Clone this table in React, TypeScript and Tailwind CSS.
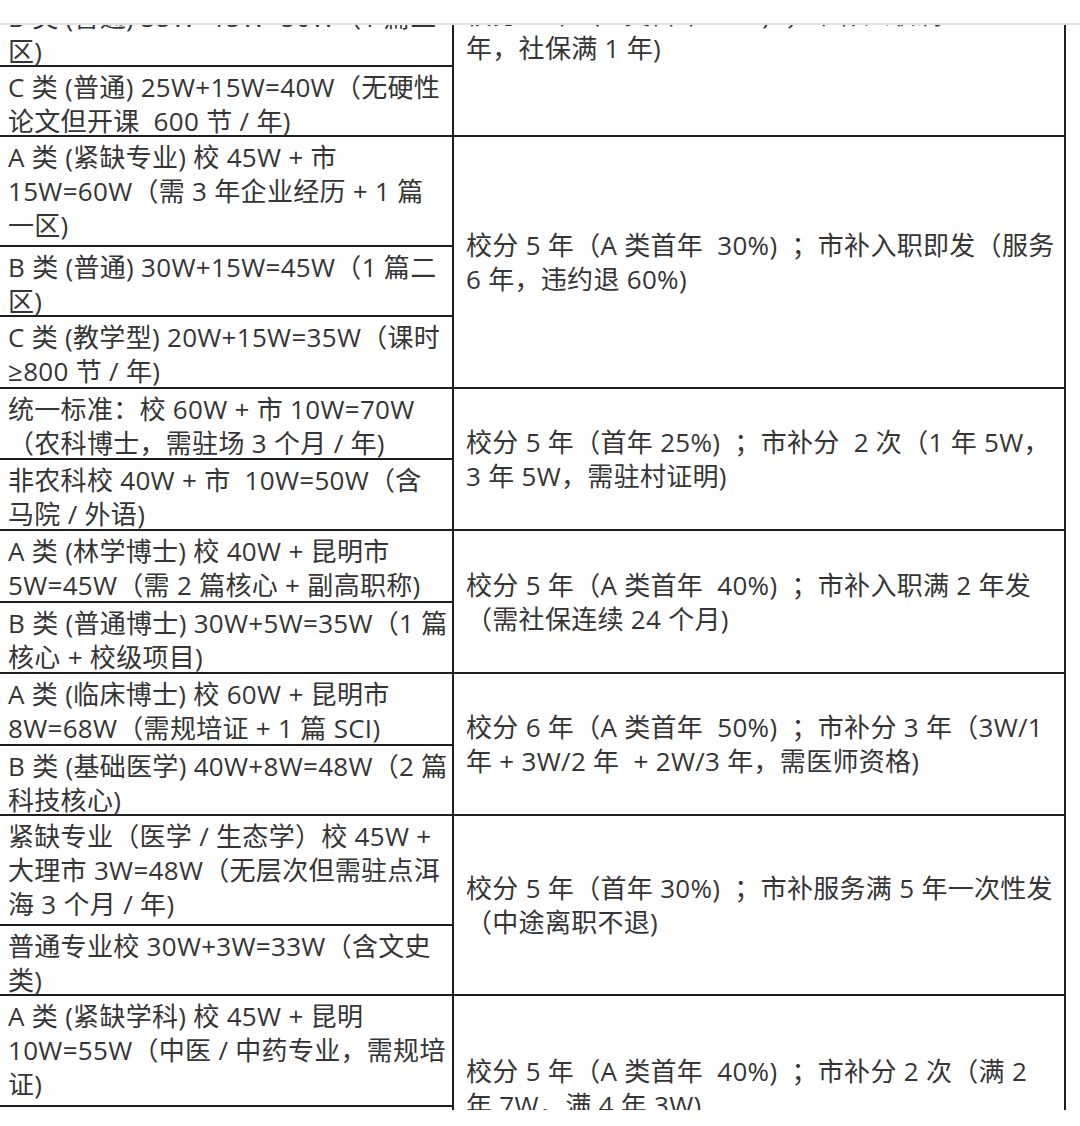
type Cell = { h: number; lines: string[] };
type Row = { cells: Cell[]; right: string[] };

const rows: Row[] = [
	{
		cells: [
			{ h: 70, lines: ["A 类 (紧缺专业) 校 50W + 市", "15W=65W（需 2 篇一区)"] },
			{ h: 70, lines: ["B 类 (普通) 35W+15W=50W（1 篇二", "区)"] },
			{ h: 70, lines: ["C 类 (普通) 25W+15W=40W（无硬性", "论文但开课  600 节 / 年)"] },
		],
		right: ["校分 5 年（A 类首年 30%)  ；市补入职满 1", "年，社保满 1 年)"],
	},
	{
		cells: [
			{
				h: 110,
				lines: ["A 类 (紧缺专业) 校 45W + 市", "15W=60W（需 3 年企业经历 + 1 篇", "一区)"],
			},
			{ h: 70, lines: ["B 类 (普通) 30W+15W=45W（1 篇二", "区)"] },
			{ h: 72, lines: ["C 类 (教学型) 20W+15W=35W（课时", "≥800 节 / 年)"] },
		],
		right: ["校分 5 年（A 类首年  30%)  ；市补入职即发（服务", "6 年，违约退 60%)"],
	},
	{
		cells: [
			{ h: 71, lines: ["统一标准：校 60W + 市 10W=70W", "（农科博士，需驻场 3 个月 / 年)"] },
			{ h: 71, lines: ["非农科校 40W + 市  10W=50W（含", "马院 / 外语)"] },
		],
		right: ["校分 5 年（首年 25%)  ；市补分  2 次（1 年 5W，", "3 年 5W，需驻村证明)"],
	},
	{
		cells: [
			{ h: 72, lines: ["A 类 (林学博士) 校 40W + 昆明市", "5W=45W（需 2 篇核心 + 副高职称)"] },
			{ h: 71, lines: ["B 类 (普通博士) 30W+5W=35W（1 篇", "核心 + 校级项目)"] },
		],
		right: ["校分 5 年（A 类首年  40%)  ；市补入职满 2 年发", "（需社保连续 24 个月)"],
	},
	{
		cells: [
			{ h: 72, lines: ["A 类 (临床博士) 校 60W + 昆明市", "8W=68W（需规培证 + 1 篇 SCI)"] },
			{ h: 70, lines: ["B 类 (基础医学) 40W+8W=48W（2 篇", "科技核心)"] },
		],
		right: ["校分 6 年（A 类首年  50%)  ；市补分 3 年（3W/1", "年 + 3W/2 年  + 2W/3 年，需医师资格)"],
	},
	{
		cells: [
			{
				h: 110,
				lines: ["紧缺专业（医学 / 生态学）校 45W +", "大理市 3W=48W（无层次但需驻点洱", "海 3 个月 / 年)"],
			},
			{ h: 70, lines: ["普通专业校 30W+3W=33W（含文史", "类)"] },
		],
		right: ["校分 5 年（首年 30%)  ；市补服务满 5 年一次性发", "（中途离职不退)"],
	},
	{
		cells: [
			{
				h: 111,
				lines: ["A 类 (紧缺学科) 校 45W + 昆明", "10W=55W（中医 / 中药专业，需规培", "证)"],
			},
			{ h: 74, lines: ["B 类 (普通) 30W+10W=40W（1 篇", "核心)"] },
		],
		right: ["校分 5 年（A 类首年  40%)  ；市补分 2 次（满 2", "年 7W，满 4 年 3W)"],
	},
];

function TableRow({ row }: { row: Row }) {
	return (
		<div className="flex">
			<div className="flex w-[454px] shrink-0 flex-col border-r-2 border-[#1f1f1f]">
				{row.cells.map((cell, i) => (
					<div
						key={i}
						className="border-b-2 border-[#1f1f1f] pl-2 pt-[3px]"
						style={{ height: cell.h }}
					>
						{cell.lines.map((line, j) => (
							<div key={j} className="whitespace-pre">
								{line}
							</div>
						))}
					</div>
				))}
			</div>
			<div className="flex w-[612px] shrink-0 items-center border-r-2 border-b-2 border-[#1f1f1f] pl-3">
				<div>
					{row.right.map((line, j) => (
						<div key={j} className="whitespace-pre">
							{line}
						</div>
					))}
				</div>
			</div>
		</div>
	);
}

export default function App() {
	return (
		<div className="h-[1126px] w-[1080px] overflow-hidden bg-white font-['Open_Sans','Noto_Sans_CJK_SC',sans-serif] text-[26px] leading-[34px] tracking-[0.3px] text-[#353535]">
			<div className="h-[25px] border-b-2 border-[#e3e3e3] bg-white" />
			<div className="h-[1085px] overflow-hidden">
				<div className="-mt-[98px] w-[1066px]">
					{rows.map((row, i) => (
						<TableRow key={i} row={row} />
					))}
				</div>
			</div>
		</div>
	);
}
